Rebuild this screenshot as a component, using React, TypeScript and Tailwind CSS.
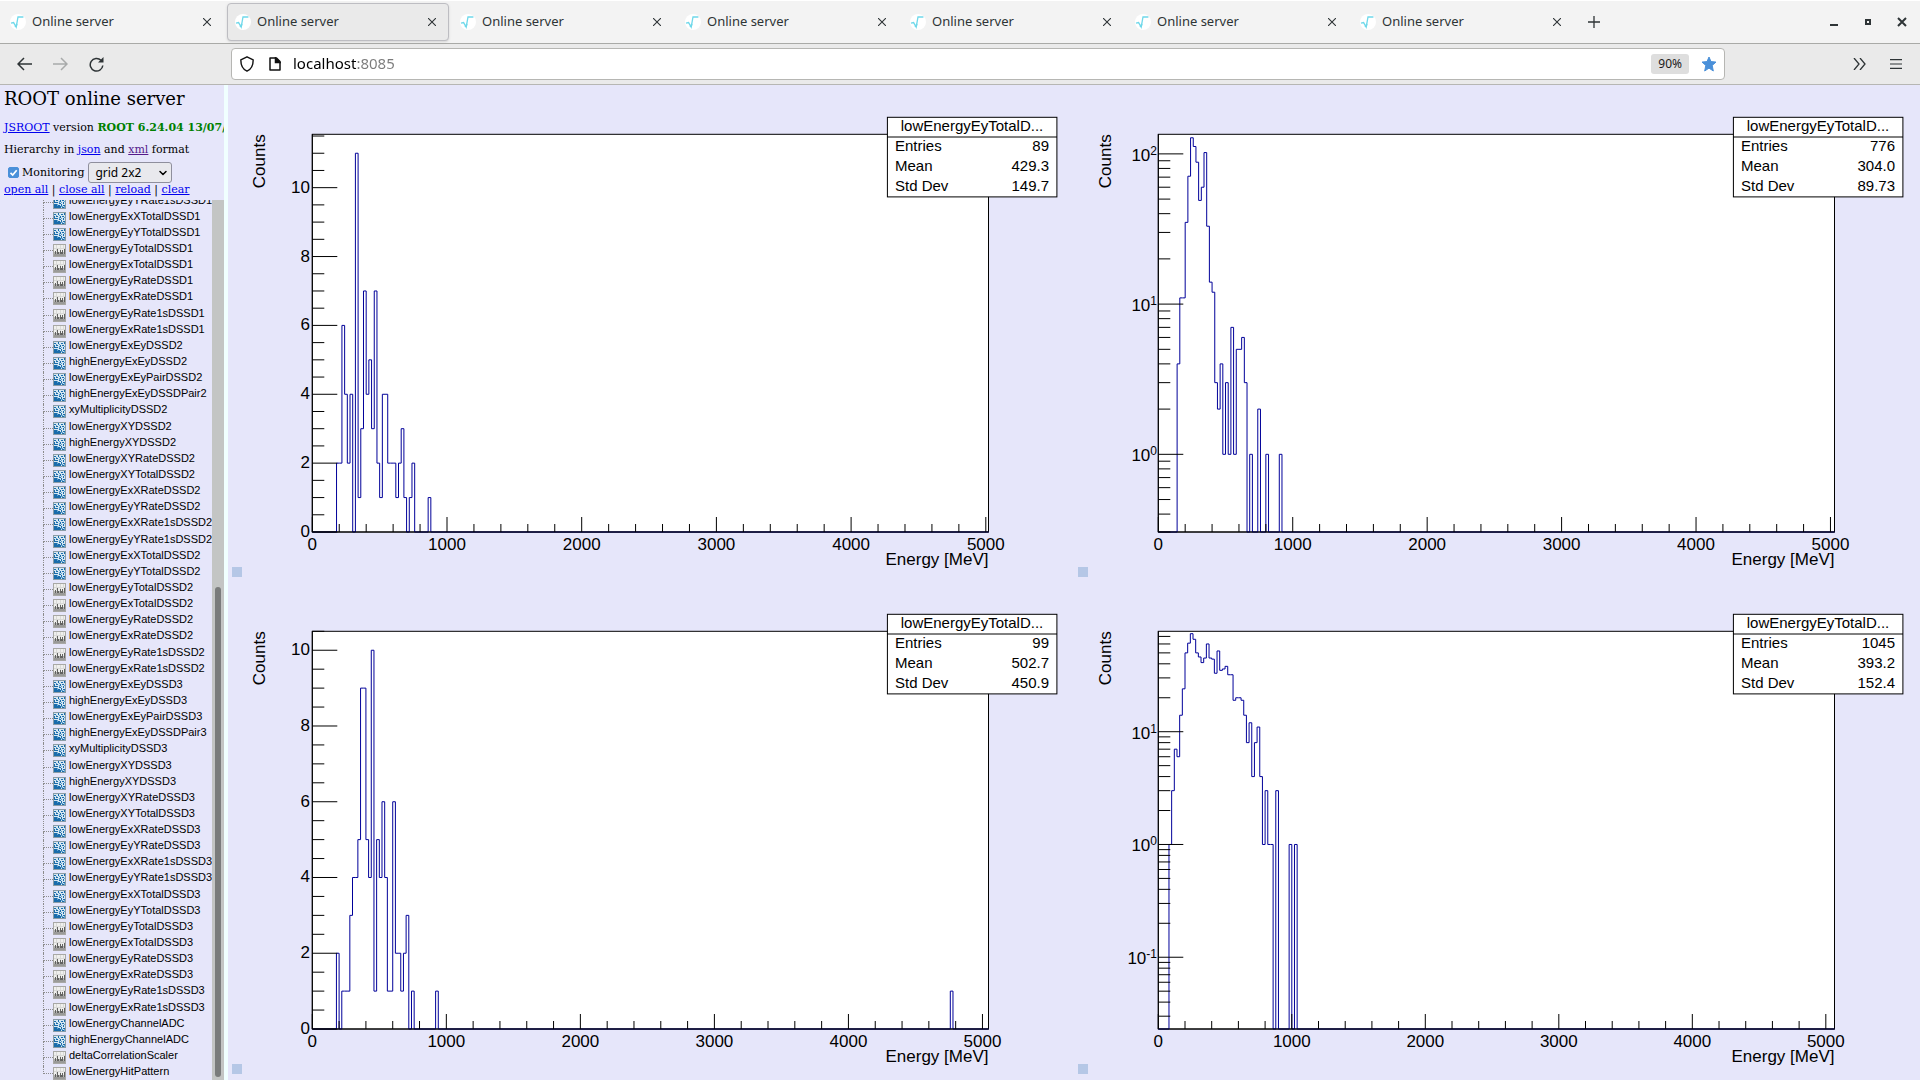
import { useState } from "react";
import { ChevronDown } from "lucide-react";

type Item = { name: string; kind: "h1" | "h2" };

const h1 = (name: string): Item => ({ name, kind: "h1" });
const h2 = (name: string): Item => ({ name, kind: "h2" });

const detectorItems = (n: number): Item[] => [
  h2(`lowEnergyExEyDSSD${n}`),
  h2(`highEnergyExEyDSSD${n}`),
  h2(`lowEnergyExEyPairDSSD${n}`),
  h2(`highEnergyExEyDSSDPair${n}`),
  h2(`xyMultiplicityDSSD${n}`),
  h2(`lowEnergyXYDSSD${n}`),
  h2(`highEnergyXYDSSD${n}`),
  h2(`lowEnergyXYRateDSSD${n}`),
  h2(`lowEnergyXYTotalDSSD${n}`),
  h2(`lowEnergyExXRateDSSD${n}`),
  h2(`lowEnergyEyYRateDSSD${n}`),
  h2(`lowEnergyExXRate1sDSSD${n}`),
  h2(`lowEnergyEyYRate1sDSSD${n}`),
  h2(`lowEnergyExXTotalDSSD${n}`),
  h2(`lowEnergyEyYTotalDSSD${n}`),
  h1(`lowEnergyEyTotalDSSD${n}`),
  h1(`lowEnergyExTotalDSSD${n}`),
  h1(`lowEnergyEyRateDSSD${n}`),
  h1(`lowEnergyExRateDSSD${n}`),
  h1(`lowEnergyEyRate1sDSSD${n}`),
  h1(`lowEnergyExRate1sDSSD${n}`),
];

const items: Item[] = [
  ...detectorItems(1).slice(12),
  ...detectorItems(2),
  ...detectorItems(3),
  h2("lowEnergyChannelADC"),
  h2("highEnergyChannelADC"),
  h1("deltaCorrelationScaler"),
  h1("lowEnergyHitPattern"),
];

type Hist = {
  entries: string;
  mean: string;
  stdDev: string;
  xmax: number;
  ymin: number;
  ymax: number;
  log: boolean;
  first: number; // index of the first bin in `bins`
  bins: number[];
  extra?: [number, number][]; // lone bins far from the rest
};

const BIN_WIDTH = 20;

const hists: Hist[] = [
  {
    entries: "89",
    mean: "429.3",
    stdDev: "149.7",
    xmax: 5020,
    ymin: 0,
    ymax: 11.55,
    log: false,
    first: 9,
    bins: [2, 2, 6, 4, 2, 4, 0, 11, 1, 3, 7, 4, 5, 3, 7, 2, 1, 4, 4, 2, 2, 2, 1, 2, 3, 1, 0, 1, 2],
    extra: [[43, 1]],
  },
  {
    entries: "776",
    mean: "304.0",
    stdDev: "89.73",
    xmax: 5030,
    ymin: 0.304,
    ymax: 135,
    log: true,
    first: 7,
    bins: [4, 11, 11, 35, 71, 128, 112, 88, 49, 60, 102, 33, 14, 12, 3, 2, 4, 1, 3, 1, 7, 1, 5, 5, 6, 3, 0, 1, 0, 0, 2, 0, 0, 1],
    extra: [[45, 1]],
  },
  {
    entries: "99",
    mean: "502.7",
    stdDev: "450.9",
    xmax: 5045,
    ymin: 0,
    ymax: 10.5,
    log: false,
    first: 9,
    bins: [2, 0, 1, 1, 1, 3, 4, 4, 5, 9, 9, 5, 4, 10, 1, 5, 4, 6, 4, 1, 1, 6, 2, 2, 1, 2, 3, 0, 1],
    extra: [
      [46, 1],
      [238, 1],
    ],
  },
  {
    entries: "1045",
    mean: "393.2",
    stdDev: "152.4",
    xmax: 5065,
    ymin: 0.0231,
    ymax: 77.7,
    log: true,
    first: 4,
    bins: [
      1, 3, 7, 6, 14, 24, 50, 61, 74, 66, 50, 46, 41, 45, 60, 45, 44, 33, 52, 35, 36, 38, 32, 32, 19, 20, 20, 19, 14, 8,
      12, 4, 8, 11, 4, 1, 3, 1, 1, 0, 3,
    ],
    extra: [
      [49, 1],
      [51, 1],
    ],
  },
];

// frame of the plot inside its pad
const L = 84.3;
const R = 760.5;
const T = 49.3;
const B = 447;

const HistPlot = ({ hist }: { hist: Hist }) => {
  const px = (v: number) => L + (v / hist.xmax) * (R - L);
  const py = (v: number) => {
    if (!hist.log) return B - (v / hist.ymax) * (B - T);
    if (v <= hist.ymin) return B;
    const span = Math.log10(hist.ymax) - Math.log10(hist.ymin);
    return B - ((Math.log10(v) - Math.log10(hist.ymin)) / span) * (B - T);
  };

  const all: [number, number][] = [
    ...hist.bins.map((v, i): [number, number] => [hist.first + i, v]),
    ...(hist.extra ?? []),
  ];
  let line = `M${L} ${B}`;
  let prev = hist.first - 1;
  all.forEach(([bin, v]) => {
    if (bin !== prev + 1) line += `V${B}`;
    line += `H${px(bin * BIN_WIDTH)}V${py(v)}H${px((bin + 1) * BIN_WIDTH)}`;
    prev = bin;
  });
  line += `V${B}H${R}`;

  const xTicks = Array.from({ length: 26 }, (_, i) => i * 200);
  const yTicks: { v: number; major: boolean }[] = [];
  if (hist.log) {
    for (let e = -2; e <= 2; e++) {
      for (let m = 1; m <= 9; m++) {
        const v = m * Math.pow(10, e);
        if (v >= hist.ymin * 0.98 && v <= hist.ymax) yTicks.push({ v, major: m === 1 });
      }
    }
  } else {
    for (let v = 0; v <= hist.ymax; v += 0.5) yTicks.push({ v, major: v % 2 === 0 });
  }

  return (
    <svg viewBox="0 0 846 497" className="block w-full font-['Liberation_Sans',sans-serif]" role="img" aria-label="Counts, Energy [MeV]">
      <rect x={L} y={T} width={R - L} height={B - T} fill="#fff" stroke="#000" />
      <path d={line} fill="none" stroke="#000099" />
      <g stroke="#000">
        <path d={`M${L} ${T}V${B}H${R}`} fill="none" />
        {xTicks.map((v) => (
          <line key={v} x1={px(v)} x2={px(v)} y1={B} y2={B - (v % 1000 === 0 ? 15 : 8)} />
        ))}
        {yTicks.map(({ v, major }) => (
          <line key={v} x1={L} x2={L + (major ? 25 : 12)} y1={py(v)} y2={py(v)} />
        ))}
      </g>
      <g fontSize="17">
        {[0, 1000, 2000, 3000, 4000, 5000].map((v) => (
          <text key={v} x={px(v)} y="465" textAnchor="middle">
            {v}
          </text>
        ))}
        {yTicks
          .filter((t) => t.major)
          .map(({ v }) =>
            hist.log ? (
              <text key={v} x="83" y={py(v) + 7} textAnchor="end">
                10
                <tspan dy="-6" fontSize="12">
                  {Math.round(Math.log10(v))}
                </tspan>
              </text>
            ) : (
              <text key={v} x="82" y={py(v) + 5} textAnchor="end">
                {v}
              </text>
            )
          )}
        <text x={R} y="480" textAnchor="end">
          Energy [MeV]
        </text>
        <text transform={`translate(37 ${T}) rotate(-90)`} textAnchor="end">
          Counts
        </text>
      </g>
      <g fontSize="15">
        <rect x="659.4" y="32.3" width="169.5" height="79.6" fill="#fff" stroke="#000" />
        <line x1="659" x2="829" y1="52" y2="52" stroke="#000" />
        <text x="744" y="46" textAnchor="middle">
          lowEnergyEyTotalD...
        </text>
        {[
          ["Entries", hist.entries],
          ["Mean", hist.mean],
          ["Std Dev", hist.stdDev],
        ].map(([label, value], i) => (
          <g key={label}>
            <text x="667" y={66 + i * 20}>
              {label}
            </text>
            <text x="821" y={66 + i * 20} textAnchor="end">
              {value}
            </text>
          </g>
        ))}
      </g>
      <rect x="4" y="482" width="10" height="10" fill="#b5c7e6" />
    </svg>
  );
};

const RootIcon = () => (
  <svg viewBox="0 0 16 16" className="size-4 shrink-0">
    <circle cx="8" cy="8" r="8" fill="#fff" />
    <path d="M1 9.2l2.6-.6 2.6 4.6L8 3h5.4" fill="none" stroke="#6fd8ea" strokeWidth="1.3" />
    <path d="M4.500 13l1.7-3.6 1.400.6-.8 3z" fill="#6fd8ea" />
  </svg>
);

const H1Icon = () => (
  <svg viewBox="0 0 13 13" className="size-[13px] shrink-0" shapeRendering="crispEdges">
    <rect width="13" height="13" fill="#a8a8a5" />
    <rect x="1" y="1" width="11" height="7" fill="#efefed" />
    <rect x="1" y="8" width="11" height="2" fill="#b4b4b2" />
    <rect x="1" y="10" width="11" height="2" fill="#9a9a98" />
    <path d="M3 1h1v6H3zM7 1h1v6H7zM10 1h1v4h-1zM1 4h11v1H1z" fill="#d9d9d7" />
    <path d="M2 7h1v3H2zM4 5h1v5H4zM5 8h1v2H5zM7 6h1v4H7zM8 8h1v2H8zM9 6h1v4H9zM11 5h1v5h-1z" fill="#626260" />
  </svg>
);

const H2Icon = () => (
  <svg viewBox="0 0 13 13" className="size-[13px] shrink-0" shapeRendering="crispEdges">
    <rect width="13" height="13" fill="#8a9ca6" />
    <rect x="1" y="1" width="11" height="11" fill="#d5e6f1" />
    <path
      d="M1 2h2v1H1zM5 1h1v2H5zM8 2h2v1H8zM11 1h1v2h-1zM1 4h1v3H1zM3 4h2v1H3zM7 4h1v2H7zM9 4h2v1H9zM2 6h3v1H2zM6 7h2v1H6zM10 6h1v2h-1zM1 8h3v4H1zM5 9h2v1H5zM4 10h4v2H4zM8 8h1v2H8zM10 9h2v1h-2zM9 11h2v1H9z"
      fill="#1a6cab"
    />
    <path d="M3 3h1v1H3zM6 3h1v1H6zM6 5h1v2H6zM8 6h1v1H8zM11 5h1v1h-1zM4 8h1v2H4zM8 10h2v1H8zM11 10h1v2h-1z" fill="#5fa3cf" />
  </svg>
);

const Tab = ({ active }: { active: boolean }) => (
  <div
    className={
      active
        ? "flex h-[38px] w-[222px] items-center gap-[6px] rounded border border-[#bdbdc2] bg-[#eaeaea] pr-3 pl-[7px] shadow-sm"
        : "flex h-[38px] w-[222px] items-center gap-[6px] pr-[13px] pl-2"
    }
  >
    <RootIcon />
    <span className="flex-1 truncate">Online server</span>
    <button aria-label="Close tab">
      <svg viewBox="0 0 8 8" className="size-2" stroke="#2e3436" strokeWidth="1.1">
        <path d="M0 0l8 8M8 0L0 8" />
      </svg>
    </button>
  </div>
);

const BrowserChrome = () => (
  <header className="font-['Noto_Sans',sans-serif] text-[#2e3436]">
    <div className="flex h-11 items-center gap-[3px] border-t border-b border-t-white border-b-[#a9aaa7] bg-[#f3f3f3] pl-[2px] text-[13px]">
      {[0, 1, 2, 3, 4, 5, 6].map((i) => (
        <Tab key={i} active={i === 1} />
      ))}
      <button aria-label="New tab" className="ml-[11px]">
        <svg viewBox="0 0 12 12" className="size-3" stroke="#2e3436" strokeWidth="1.3">
          <path d="M6 0v12M0 6h12" />
        </svg>
      </button>
      <div className="ml-auto flex items-center gap-6 pr-[13px]">
        <button aria-label="Minimize">
          <svg viewBox="0 0 10 10" className="size-[10px]">
            <path d="M1 7h8v2H1z" fill="#2e3436" />
          </svg>
        </button>
        <button aria-label="Maximize">
          <svg viewBox="0 0 10 10" className="size-[10px]">
            <path d="M3 3h4v4H3z" fill="none" stroke="#2e3436" strokeWidth="2" />
          </svg>
        </button>
        <button aria-label="Close window">
          <svg viewBox="0 0 10 10" className="size-[10px]" stroke="#2e3436" strokeWidth="2">
            <path d="M1 1l8 8M9 1L1 9" />
          </svg>
        </button>
      </div>
    </div>
    <div className="flex h-[41px] items-center border-b border-[#b6b6b3] bg-[#eaeaea] pr-3">
      <nav className="flex w-[231px] shrink-0 items-center gap-[21px] pl-[17px]">
        <button aria-label="Back">
          <svg viewBox="0 0 15 14" className="h-[14px] w-[15px]" fill="none" stroke="#2e3436" strokeWidth="1.5">
            <path d="M15 7H1.5M7 1L1 7l6 6" />
          </svg>
        </button>
        <button aria-label="Forward">
          <svg viewBox="0 0 15 14" className="h-[14px] w-[15px]" fill="none" stroke="#a8aaaa" strokeWidth="1.5">
            <path d="M0 7h13.5M8 1l6 6-6 6" />
          </svg>
        </button>
        <button aria-label="Reload">
          <svg viewBox="0 0 15 15" className="size-[15px]" fill="none" stroke="#2e3436" strokeWidth="1.5">
            <path d="M13.8 8.5A6.3 6.3 0 1 1 12 3.3" />
            <path d="M14.5 0v5.5H9z" fill="#2e3436" stroke="none" />
          </svg>
        </button>
      </nav>
      <div className="flex h-8 flex-1 items-center rounded border border-[#b6b6b3] bg-white pr-[7px] pl-2">
        <svg viewBox="0 0 14 16" className="h-4 w-[14px]" fill="none" stroke="#111" strokeWidth="1.4">
          <path d="M7 .8l6.200 3c0 5-1.700 9.500-6.200 11.400C2.500 13.300.8 8.800.8 3.800z" strokeLinejoin="round" />
        </svg>
        <svg viewBox="0 0 12 14" className="ml-[15px] h-[14px] w-3" fill="none" stroke="#111" strokeWidth="1.5">
          <path d="M1 1h6.500L11 4.500V13H1z" strokeLinejoin="round" />
          <path d="M6.500 1v4.500H11z" fill="#111" />
        </svg>
        <input
          aria-label="Address"
          defaultValue="localhost:8085"
          className="ml-3 min-w-0 flex-1 bg-[linear-gradient(to_right,#000_64px,#7b7b7b_64px)] bg-clip-text pb-px text-[15px] text-transparent outline-none"
        />
        <button className="h-5 rounded-[3px] bg-[#dedede] px-[7px] text-xs text-[#1a1a1a]">90%</button>
        <button aria-label="Bookmark" className="ml-3">
          <svg viewBox="0 0 16 16" className="size-4" fill="#4a90d9" stroke="#4a90d9" strokeLinejoin="round">
            <path d="M8 1l2 4.600 5 .5-3.800 3.300L12.300 15 8 12.100 3.700 15l1.100-5.600L1 6.100l5-.5z" />
          </svg>
        </button>
      </div>
      <div className="flex w-[183px] items-center justify-end gap-6 pr-[6px]">
        <button aria-label="More tools">
          <svg viewBox="0 0 13 12" className="h-3 w-[13px]" fill="none" stroke="#2e3436" strokeWidth="1.3">
            <path d="M1 0l5 6-5 6M7 0l5 6-5 6" />
          </svg>
        </button>
        <button aria-label="Menu">
          <svg viewBox="0 0 12 10" className="h-[10px] w-3" stroke="#2e3436" strokeWidth="1.2">
            <path d="M0 .6h12M0 5h12M0 9.400h12" />
          </svg>
        </button>
      </div>
    </div>
  </header>
);

const Sidebar = () => {
  const [monitoring, setMonitoring] = useState(true);

  return (
    <aside className="flex w-[228px] shrink-0 flex-col border-r-4 border-[#f0ffff] font-['DejaVu_Serif',serif] text-[11px] leading-[14px]">
      <div className="overflow-hidden pl-1 whitespace-nowrap">
        <h1 className="mt-[2px] text-[18px] leading-6">ROOT online server</h1>
        <p className="mt-[10px]">
          <a href="#jsroot" className="text-[#0000ee] underline">JSROOT</a> version{" "}
          <b className="text-[#008000]">ROOT 6.24.04 13/07/2021</b>
        </p>
        <p className="mt-2">
          Hierarchy in <a href="#json" className="text-[#0000ee] underline">json</a> and{" "}
          <a href="#xml" className="text-[#551a8b] underline">xml</a> format
        </p>
        <div className="mt-[5px] flex items-center gap-1 pl-1">
          <label className="flex items-center gap-[3px]">
            <span className="relative flex">
              <input
                type="checkbox"
                checked={monitoring}
                onChange={(e) => setMonitoring(e.target.checked)}
                className="size-[11px] appearance-none rounded-[2px] border border-[#4a90d9] checked:bg-[#4a90d9]"
              />
              <svg viewBox="0 0 11 11" className="pointer-events-none absolute inset-0" fill="none" stroke="#fff" strokeWidth="1.7">
                <path d="M2.500 5.800l2.200 2.200 4-4.800" />
              </svg>
            </span>
            Monitoring
          </label>
          <span className="relative flex">
            <select
              aria-label="Layout"
              className="h-[21px] w-[84px] appearance-none rounded-[3px] border border-[#8f8f9d] bg-[#e9e9ed] pl-[6px] font-['Noto_Sans',sans-serif] text-xs leading-4"
            >
              <option>grid 2x2</option>
              <option>tabs</option>
            </select>
            <ChevronDown className="pointer-events-none absolute top-[5px] right-[3px] size-3" strokeWidth={3} />
          </span>
        </div>
        <p className="mb-[3px]">
          <a href="#open" className="text-[#0000ee] underline">open all</a> |{" "}
          <a href="#close" className="text-[#0000ee] underline">close all</a> |{" "}
          <a href="#reload" className="text-[#0000ee] underline">reload</a> |{" "}
          <a href="#clear" className="text-[#0000ee] underline">clear</a>
        </p>
      </div>
      <div className="flex min-h-0 flex-1 overflow-hidden">
        <ul className="-mt-[6px] -mb-[2px] flex flex-1 flex-col pl-[43px] font-['Liberation_Sans',sans-serif]">
          {items.map((item) => (
            <li key={item.name} className="group flex min-h-0 flex-1 items-center">
              <span className="flex w-[10px] flex-col self-stretch">
                <span className="flex-1 border-b border-l border-dotted border-[#8c8c8c]" />
                <span className="flex-1 border-l border-dotted border-[#8c8c8c] group-last:border-transparent" />
              </span>
              {item.kind === "h1" ? <H1Icon /> : <H2Icon />}
              <a href="#item" className="pb-[5px] pl-[3px] leading-3 text-black">
                {item.name}
              </a>
            </li>
          ))}
        </ul>
        <div className="flex w-3 flex-col bg-[#c3c5c4] px-[3px] pb-[3px]">
          <div className="flex-[387]" />
          <div className="flex-[490] rounded-full bg-[#7a7c7c]" />
        </div>
      </div>
    </aside>
  );
};

export default function App() {
  return (
    <div className="flex h-screen flex-col overflow-hidden bg-[#e6e6fa] text-black">
      <BrowserChrome />
      <div className="flex min-h-0 flex-1">
        <Sidebar />
        <main className="grid flex-1 grid-cols-2 content-start">
          {hists.map((hist) => (
            <HistPlot key={hist.entries} hist={hist} />
          ))}
        </main>
      </div>
    </div>
  );
}
